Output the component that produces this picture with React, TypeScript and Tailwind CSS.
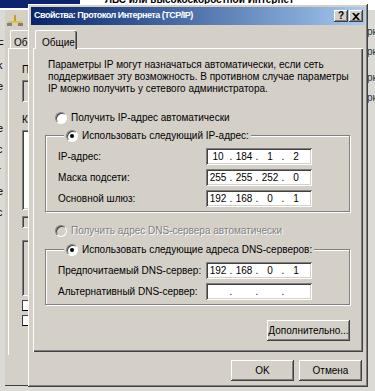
import { Fragment } from "react";

const raised =
  "shadow-[inset_-1px_-1px_#404040,inset_1px_1px_#ffffff,inset_-2px_-2px_#808080,inset_2px_2px_#d4d0c8]";
const sunken =
  "shadow-[inset_1px_1px_#808080,inset_-1px_-1px_#ffffff,inset_2px_2px_#404040,inset_-2px_-2px_#d4d0c8]";

function Radio({ checked, disabled }: { checked?: boolean; disabled?: boolean }) {
  return (
    <span
      className={`inline-flex w-[12px] h-[12px] shrink-0 items-center justify-center rounded-full border border-t-[#808080] border-l-[#808080] border-r-white border-b-white shadow-[inset_1px_1px_#404040] ${
        disabled ? "bg-[#d4d0c8]" : "bg-white"
      }`}
    >
      {checked && <span className="w-[4px] h-[4px] rounded-full bg-black" />}
    </span>
  );
}

function IpBox({ parts }: { parts: string[] }) {
  return (
    <div className={`flex items-center w-[106px] h-[17px] bg-white pl-[2px] ${sunken}`}>
      {parts.map((p, i) => (
        <Fragment key={i}>
          {i > 0 && <span className="w-[6px] text-center">.</span>}
          <span className="w-[20px] text-center">{p}</span>
        </Fragment>
      ))}
    </div>
  );
}

function Row({ label, parts }: { label: string; parts: string[] }) {
  return (
    <div className="grid grid-cols-[148px_106px] items-center h-[17px]">
      <span className="whitespace-nowrap">{label}</span>
      <IpBox parts={parts} />
    </div>
  );
}

function Group({ legend, children }: { legend: string; children: React.ReactNode }) {
  return (
    <fieldset className="ml-[12px] mr-[13px] border border-[#808080] shadow-[inset_1px_1px_#ffffff,1px_1px_#ffffff] pl-[12px] pb-[4px]">
      <legend className="ml-[6px] px-[2px] bg-[#d4d0c8]">
        <span className="flex items-center gap-[4px] h-[13px] leading-[13px]">
          <Radio checked />
          {legend}
        </span>
      </legend>
      <div className="flex flex-col gap-[4px] pt-[6px]">{children}</div>
    </fieldset>
  );
}

function Button({ label, w }: { label: string; w: string }) {
  return (
    <div className={`flex items-center justify-center h-[21px] bg-[#d4d0c8] ${w} ${raised}`}>
      {label}
    </div>
  );
}

function BackWindow() {
  return (
    <div className="absolute left-[5px] top-[10px] w-[40px] h-[376px] bg-[#d4d0c8] border-b border-[#404040]">
      <div className="h-[20px] pl-[2px] pt-[5px]">
        <svg width="16" height="11" viewBox="0 0 16 11">
          <rect x="7" y="0" width="2" height="7" fill="#c8a020" />
          <rect x="1" y="6" width="14" height="2" fill="#e0c040" />
          <rect x="0" y="8" width="5" height="3" fill="#808080" />
          <rect x="11" y="8" width="5" height="3" fill="#808080" />
        </svg>
      </div>
      <div className="ml-[5px] h-[18px] w-[30px] border-l border-t border-white rounded-tl-[2px] pl-[3px] pt-[4px]">
        Об
      </div>
      <div className="ml-[3px] h-[307px] border-l border-t border-white pl-[13px]">
        <div className="mt-[15px] h-[12px] leading-[12px]">П</div>
        <div className={`mt-[4px] h-[22px] w-[30px] bg-[#d4d0c8] ${sunken}`} />
        <div className="mt-[12px] h-[12px] leading-[12px]">К</div>
        <div className={`mt-[4px] h-[80px] w-[30px] bg-white ${sunken}`} />
        <div className={`mt-[6px] h-[12px] w-[30px] ${sunken}`} />
        <div className={`mt-[12px] h-[56px] w-[30px] bg-[#d4d0c8] ${sunken}`} />
        <div className="mt-[4px] flex flex-col gap-[4px]">
          <span className="w-[10px] h-[11px] bg-white border border-t-[#404040] border-l-[#404040]" />
          <span className="w-[10px] h-[11px] bg-white border border-t-[#404040] border-l-[#404040]" />
        </div>
      </div>
    </div>
  );
}

export default function App() {
  return (
    <div className="relative w-[375px] h-[391px] overflow-hidden bg-[#dcdad5] text-[10px] text-black font-['Liberation_Sans',sans-serif]">
      {/* desktop behind */}
      <div className="flex h-[10px] bg-white">
        <div className="w-[80px] h-[8px] bg-[#0c2470]" />
        <div className="ml-[25px] -mt-[6px] text-[10px] font-bold leading-[12px] whitespace-nowrap">
          ЛВС или высокоскоростной Интернет
        </div>
      </div>
      <div className="absolute left-[-3px] top-[38px] flex flex-col gap-[9px] leading-[12px] text-[11px]">
        <span>F</span>
        <span>k</span>
        <span>е</span>
        <span>l</span>
        <span>е</span>
        <span>с</span>
        <span>г</span>
        <span>е</span>
        <span>с</span>
      </div>
      <div className="absolute left-[367px] top-[26px] flex flex-col gap-[8px] leading-[12px] text-[10px] text-[#333]">
        <span>рк</span>
        <span>рк</span>
        <span className="mt-[6px]">рк</span>
        <span>рк</span>
      </div>
      <BackWindow />

      {/* dialog */}
      <div className={`absolute left-[28px] top-[4px] w-[340px] h-[383px] bg-[#d4d0c8] p-[3px] ${raised}`}>
        <div className="flex items-center h-[18px] pl-[3px] pr-[2px] bg-linear-to-r from-[#0a246a] to-[#a6caf0]">
          <span className="flex-1 text-[9px] tracking-[-0.5px] font-bold text-white whitespace-nowrap">
            Свойства: Протокол Интернета (TCP/IP)
          </span>
          <div className={`flex items-center justify-center w-[14px] h-[12px] bg-[#d4d0c8] text-[10px] font-bold leading-none ${raised}`}>
            ?
          </div>
          <div className={`flex items-center justify-center w-[14px] h-[12px] ml-[1px] bg-[#d4d0c8] ${raised}`}>
            <svg width="8" height="7" viewBox="0 0 8 7">
              <path d="M0 0h2l2 2 2-2h2L5 3.5 8 7H6L4 5 2 7H0l3-3.5z" fill="#000" />
            </svg>
          </div>
        </div>

        <div className="mt-[5px] ml-[2px] mr-[2px]">
          <div className="relative z-10 ml-[2px] w-[42px] h-[19px] -mb-[1px] bg-[#d4d0c8] rounded-t-[2px] border-l border-t border-white shadow-[inset_-1px_0_#404040,inset_-2px_0_#808080] pl-[6px] pt-[4px]">
            Общие
          </div>
          <div className="h-[304px] bg-[#d4d0c8] shadow-[inset_1px_1px_#ffffff,inset_-1px_-1px_#404040,inset_-2px_-2px_#808080] pt-[11px]">
            <p className="pl-[15px] pr-[6px] leading-[12px] whitespace-nowrap">
              Параметры IP могут назначаться автоматически, если сеть
              <br />
              поддерживает эту возможность. В противном случае параметры
              <br />
              IP можно получить у сетевого администратора.
            </p>
            <div className="flex items-center gap-[4px] h-[13px] mt-[16px] ml-[22px]">
              <Radio />
              Получить IP-адрес автоматически
            </div>
            <div className="mt-[5px]">
              <Group legend="Использовать следующий IP-адрес:">
                <Row label="IP-адрес:" parts={["10", "184", "1", "2"]} />
                <Row label="Маска подсети:" parts={["255", "255", "252", "0"]} />
                <Row label="Основной шлюз:" parts={["192", "168", "0", "1"]} />
              </Group>
            </div>
            <div className="flex items-center gap-[4px] h-[13px] mt-[12px] ml-[22px] text-[#808080] [text-shadow:1px_1px_0_#ffffff]">
              <Radio disabled />
              Получить адрес DNS-сервера автоматически
            </div>
            <div className="mt-[6px]">
              <Group legend="Использовать следующие адреса DNS-серверов:">
                <Row label="Предпочитаемый DNS-сервер:" parts={["192", "168", "0", "1"]} />
                <Row label="Альтернативный DNS-сервер:" parts={["", "", "", ""]} />
              </Group>
            </div>
            <div className="flex justify-end mt-[15px] mr-[13px]">
              <Button label="Дополнительно..." w="w-[83px]" />
            </div>
          </div>
        </div>

        <div className="flex justify-end gap-[5px] mt-[8px] pr-[3px]">
          <Button label="OK" w="w-[63px]" />
          <Button label="Отмена" w="w-[63px]" />
        </div>
      </div>
    </div>
  );
}
